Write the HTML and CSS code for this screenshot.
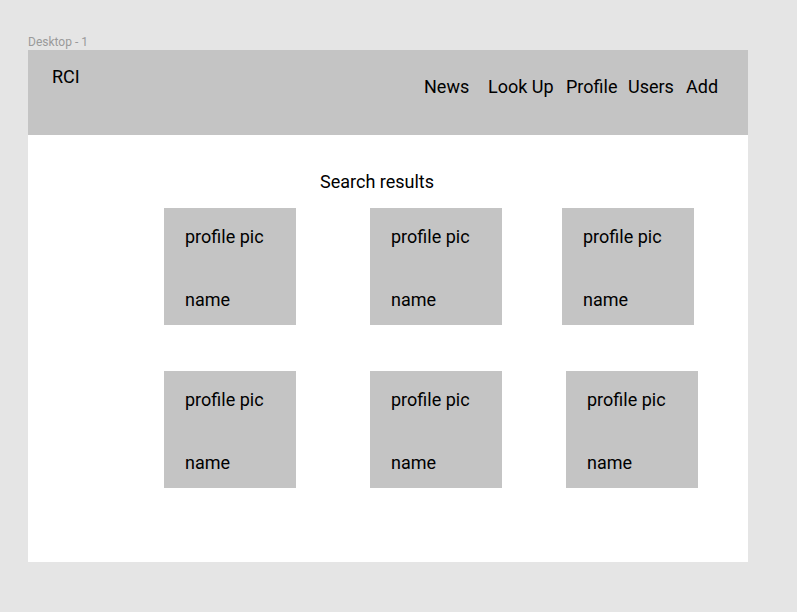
FILE: index.html
```html
<!DOCTYPE html>
<html>
<head>
<meta charset="utf-8">
<link rel="stylesheet" href="styles.css">
</head>
<body>
<div class="canvas">
  <div class="frame-label">Desktop - 1</div>
  <div class="frame">
    <header class="header">
      <div class="brand">RCI</div>
      <nav class="nav">
        <span class="nav-item nav-news">News</span>
        <span class="nav-item nav-lookup">Look Up</span>
        <span class="nav-item nav-profile">Profile</span>
        <span class="nav-item nav-users">Users</span>
        <span class="nav-item nav-add">Add</span>
      </nav>
    </header>
    <main class="content">
      <div class="title">Search results</div>
      <div class="row row-1">
        <div class="card"><div class="pic">profile pic</div><div class="name">name</div></div>
        <div class="card"><div class="pic">profile pic</div><div class="name">name</div></div>
        <div class="card"><div class="pic">profile pic</div><div class="name">name</div></div>
      </div>
      <div class="row row-2">
        <div class="card"><div class="pic">profile pic</div><div class="name">name</div></div>
        <div class="card"><div class="pic">profile pic</div><div class="name">name</div></div>
        <div class="card"><div class="pic">profile pic</div><div class="name">name</div></div>
      </div>
    </main>
  </div>
</div>
</body>
</html>
```

FILE: styles.css
```css
html, body {
  margin: 0;
  padding: 0;
  background: #e5e5e5;
  font-family: Roboto, "Noto Sans", sans-serif;
  color: #000;
}

.canvas {
  padding: 35px 0 0 28px;
}

.frame-label {
  font-size: 12px;
  line-height: 14px;
  height: 15px;
  color: #9a9a9a;
}

.frame {
  width: 720px;
  height: 512px;
  background: #ffffff;
}

.header {
  height: 85px;
  background: #c4c4c4;
  display: flex;
  align-items: flex-start;
  padding-left: 24px;
  box-sizing: border-box;
}

.brand {
  flex: 0 0 372px;
  margin-top: 16px;
  font-size: 18px;
  line-height: 21px;
}

.nav {
  display: flex;
  margin-top: 26px;
  font-size: 18px;
  line-height: 21px;
}

.nav-news { width: 64px; }
.nav-lookup { width: 78px; }
.nav-profile { width: 62px; }
.nav-users { width: 58px; }

.content {
  padding-top: 36px;
}

.title {
  padding-left: 292px;
  font-size: 18px;
  line-height: 21px;
  margin-bottom: 16px;
}

.row {
  display: flex;
}

.row-1 {
  padding-left: 136px;
  margin-bottom: 46px;
}

.row-1 .card:nth-child(2) { margin-left: 74px; }
.row-1 .card:nth-child(3) { margin-left: 60px; }

.row-2 {
  padding-left: 136px;
}

.row-2 .card:nth-child(2) { margin-left: 74px; }
.row-2 .card:nth-child(3) { margin-left: 64px; }

.card {
  width: 132px;
  height: 117px;
  background: #c4c4c4;
  box-sizing: border-box;
  padding: 18px 21px 0;
  font-size: 18px;
  line-height: 21px;
}

.name {
  margin-top: 42px;
}
```
